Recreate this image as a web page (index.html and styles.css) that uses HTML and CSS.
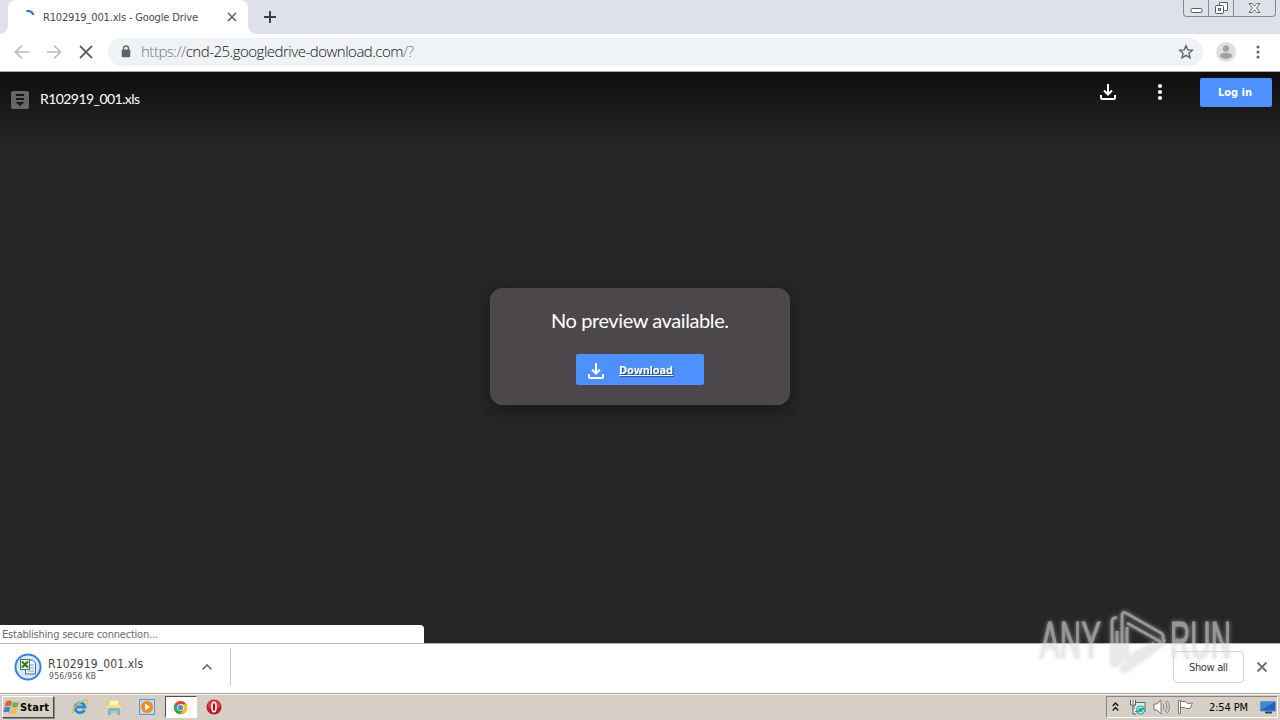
FILE: index.html
```html
<!DOCTYPE html>
<html lang="en">
<head>
<meta charset="utf-8">
<title>R102919_001.xls - Google Drive</title>
<link rel="stylesheet" href="styles.css">
</head>
<body>
<div class="screen">
  <header class="tabstrip">
    <div class="tab">
      <svg class="spinner" width="16" height="16" viewBox="0 0 16 16"><path d="M5.500 2.200C9 1.400 11.200 3 12.400 6" fill="none" stroke="#2671d9" stroke-width="2"/></svg>
      <span class="tab-title"><svg class="fit" width="156" height="18"><text x="0" y="13" textLength="155">R102919_001.xls - Google Drive</text></svg></span>
      <svg class="tab-close" width="10" height="10" viewBox="0 0 10 10"><path d="M1 1l8 8M9 1L1 9" stroke="#5f6368" stroke-width="1.7"/></svg>
      <i class="curve curve-left"></i><i class="curve curve-right"></i>
    </div>
    <svg class="new-tab" width="12" height="12" viewBox="0 0 12 12"><path d="M6 0v12M0 6h12" stroke="#3c4043" stroke-width="2"/></svg>
    <div class="window-buttons">
      <span class="wb wb-min"><svg width="13" height="17" viewBox="0 0 13 17"><rect x="1" y="8.500" width="11" height="4" rx="1.200" fill="#fff" stroke="#555b66"/></svg></span>
      <span class="wb wb-max"><svg width="13" height="17" viewBox="0 0 13 17"><path d="M4.500 5.500v-3h8v8h-3" fill="#fff" stroke="#555b66"/><rect x=".5" y="5.500" width="8" height="8" rx="1" fill="#fff" stroke="#555b66"/><rect x="3.500" y="8.500" width="2" height="2" fill="none" stroke="#555b66"/></svg></span>
      <span class="wb wb-close"><svg width="13" height="17" viewBox="0 0 13 17"><path d="M1 3.500h3.200l2.300 2.700 2.300-2.700H12L8.500 8l3.500 4.500H8.800L6.500 9.800l-2.300 2.700H1L4.500 8z" fill="#fff" stroke="#555b66" stroke-width=".9"/></svg></span>
    </div>
  </header>

  <nav class="toolbar">
    <svg class="nav-icon" width="16" height="16" viewBox="0 0 16 16"><path d="M15 8H2M8 1.500L1.500 8 8 14.500" fill="none" stroke="#bababa" stroke-width="1.700"/></svg>
    <svg class="nav-icon" width="16" height="16" viewBox="0 0 16 16"><path d="M1 8h13M8 1.500L14.500 8 8 14.500" fill="none" stroke="#bababa" stroke-width="1.700"/></svg>
    <svg class="nav-icon" width="16" height="16" viewBox="0 0 16 16"><path d="M2 2l12 12M14 2L2 14" stroke="#5f6368" stroke-width="1.800"/></svg>
    <div class="omnibox">
      <svg class="lock" width="10" height="13" viewBox="0 0 10 13"><path d="M2.500 6V3.500a2.500 2.500 0 0 1 5 0V6" fill="none" stroke="#5f6368" stroke-width="1.300"/><rect x=".7" y="4.500" width="8.600" height="7.800" rx="1" fill="#5f6368"/></svg>
      <svg class="url" width="276" height="24"><text x="0" y="17" textLength="273" fill="#70757a">https://<tspan fill="#101114">cnd-25.googledrive-download.com</tspan>/?</text></svg>
      <svg class="star" width="16" height="16" viewBox="0 0 16 16"><path d="M8 1.700l1.800 4.200 4.600.4-3.500 3 1.100 4.500L8 11.400l-4 2.400 1.100-4.500-3.500-3 4.600-.4z" fill="none" stroke="#5f6368" stroke-width="1.400"/></svg>
    </div>
    <svg class="avatar" width="20" height="20" viewBox="0 0 20 20"><circle cx="10" cy="10" r="10" fill="#dfdfdf"/><circle cx="10" cy="6.500" r="3.100" fill="#a1a1a1"/><ellipse cx="10" cy="13.700" rx="6" ry="3" fill="#a1a1a1"/></svg>
    <svg class="menu" width="4" height="14" viewBox="0 0 4 14"><g fill="#5f6368"><circle cx="2" cy="2" r="1.500"/><circle cx="2" cy="7" r="1.500"/><circle cx="2" cy="12" r="1.500"/></g></svg>
  </nav>

  <main class="viewer">
    <div class="viewer-bar">
      <svg class="file-icon" width="18" height="18" viewBox="0 0 18 18"><rect width="18" height="18" rx="2" fill="#666"/><path d="M5 4h8M5 8h8" stroke="#161616" stroke-width="2"/><path d="M4.500 11h9L9 15z" fill="#161616"/></svg>
      <svg class="file-name" width="104" height="22"><text x="0" y="16" textLength="100">R102919_001.xls</text></svg>
      <svg class="bar-download" width="18" height="18" viewBox="0 0 18 18"><path d="M9 1v10M5 7.500l4 4 4-4M2 12v3q0 1 1 1h12q1 0 1-1v-3" fill="none" stroke="#fff" stroke-width="2"/></svg>
      <svg class="bar-menu" width="6" height="18" viewBox="0 0 6 18"><g fill="#fff"><circle cx="3" cy="3" r="2.100"/><circle cx="3" cy="9" r="2.100"/><circle cx="3" cy="15" r="2.100"/></g></svg>
      <div class="login"><svg width="36" height="18"><text x="0" y="12" textLength="34">Log in</text></svg></div>
    </div>
    <section class="preview">
      <svg class="message" width="180" height="30"><text x="1" y="21" textLength="178">No preview available.</text></svg>
      <div class="download">
        <svg width="18" height="18" viewBox="0 0 18 18"><path d="M9 1v10M5 7.500l4 4 4-4M2 12v3q0 1 1 1h12q1 0 1-1v-3" fill="none" stroke="#fff" stroke-width="2"/></svg>
        <svg class="download-label" width="56" height="18"><text x="1" y="13" textLength="54">Download</text></svg>
      </div>
    </section>
    <div class="status"><svg width="160" height="18"><text x="2" y="13" textLength="156">Establishing secure connection...</text></svg></div>
  </main>

  <section class="shelf">
    <svg class="xls" width="28" height="28" viewBox="0 0 28 28"><circle cx="14" cy="14" r="12.500" fill="#d9e7f8" stroke="#377fdc" stroke-width="2"/><path d="M11.500 7h7l3 3v11h-10z" fill="#eff5ff" stroke="#4667a3"/><path d="M14 12h6M14 15h6M14 18h6" stroke="#86a3cf"/><rect x="6.500" y="6.500" width="9" height="10" fill="#e9f5df" stroke="#418039"/><path d="M8 8.500l6 6M14 8.500l-6 6" stroke="#25742f" stroke-width="2"/></svg>
    <div class="file-info">
      <svg class="file-title" width="98" height="15"><text x="0" y="12" textLength="95">R102919_001.xls</text></svg>
      <svg class="file-size" width="52" height="10"><text x="1" y="8" textLength="47">956/956 KB</text></svg>
    </div>
    <svg class="chevron" width="12" height="8" viewBox="0 0 12 8"><path d="M1.500 6.500L6 2l4.500 4.500" fill="none" stroke="#6e6e6e" stroke-width="1.700"/></svg>
    <i class="shelf-rule"></i>
    <div class="show-all"><svg width="42" height="18"><text x="1" y="13" textLength="39">Show all</text></svg></div>
    <svg class="shelf-close" width="12" height="12" viewBox="0 0 12 12"><path d="M1.500 1.500l9 9M10.500 1.500l-9 9" stroke="#6b6f74" stroke-width="1.800"/></svg>
  </section>

  <footer class="taskbar">
    <div class="start">
      <svg width="17" height="17" viewBox="0 0 17 17"><path d="M3 2.500q3-2 6 0L7.700 7.500q-3-1.500-6 0z" fill="#df6038"/><path d="M10 3q3 1.300 6 0l-1.500 5q-3 1.500-5.800 0z" fill="#78ae43"/><path d="M1.500 8.600q3-1.500 5.900 0L6 13.500q-3-1.500-5.800 0z" fill="#4583ca"/><path d="M8.400 9.200q3 1.500 5.900 0L13 14q-3 1.700-6 0z" fill="#edba3c"/></svg>
      <svg class="start-label" width="31" height="16"><text x="0" y="12" textLength="29">Start</text></svg>
    </div>
    <div class="launch"><svg width="18" height="18" viewBox="0 0 18 18"><path d="M13.500 12A5 5 0 1 1 14 9H5" fill="none" stroke="#278bd1" stroke-width="2.800"/><path d="M2 16C-1 13 8 3 15 2q3 0 1 3.500" fill="none" stroke="#e4b84b" stroke-width="1.400"/><path d="M5 6q3-4 7-2" fill="none" stroke="#75cef5"/></svg></div>
    <div class="launch"><svg width="18" height="18" viewBox="0 0 18 18"><path d="M2 3h5l1 2h8v10H2z" fill="#e7c772"/><path d="M4 2h10v9H4z" fill="#fff4b8" stroke="#d9bd67" stroke-width=".7"/><path d="M2 7h14v6H2z" fill="#f5dd87"/><path d="M3 17v-6q0-1 1-1h10q1 0 1 1v6h-3v-4H6v4z" fill="#73b9dc"/></svg></div>
    <div class="launch"><svg width="18" height="18" viewBox="0 0 18 18"><rect x="1.500" y="1.500" width="15" height="15" fill="#b9daf2" stroke="#5b99cd"/><circle cx="9" cy="9" r="6" fill="#f08a1d"/><path d="M7 5.500v7l5-3.500z" fill="#fff"/></svg></div>
    <div class="launch active"><svg width="15" height="15" viewBox="0 0 18 18"><circle cx="9" cy="9" r="8" fill="#e54335"/><path d="M9 9L2.100 5A8 8 0 0 0 9 17l4-7z" fill="#36a853"/><path d="M9 5h7a8 8 0 0 1-7 12l4-7z" fill="#fbc116"/><circle cx="9" cy="9" r="4" fill="#fff"/><circle cx="9" cy="9" r="3.100" fill="#4688ed"/></svg></div>
    <div class="launch"><svg width="16" height="16" viewBox="0 0 16 16"><circle cx="8" cy="8" r="7.500" fill="#b91b20"/><ellipse cx="8" cy="6" rx="6" ry="4.500" fill="#da4547"/><ellipse cx="8" cy="8" rx="2" ry="4.700" fill="#9d151a" stroke="#fff" stroke-width="1.600"/></svg></div>
    <div class="tray">
      <svg class="tray-up" width="7" height="10" viewBox="0 0 7 10"><path d="M.7 4l2.800-3 2.800 3M.7 8.500l2.800-3 2.800 3" fill="none" stroke="#111" stroke-width="1.300"/></svg>
      <svg class="tray-net" width="17" height="17" viewBox="0 0 17 17"><rect x="5" y="3.500" width="11" height="9" fill="#d5ece8" stroke="#5b6f71"/><path d="M1.500 1v5h5V1M4 1v4M4 6v9h3" fill="#fff" stroke="#555"/><circle cx="11.500" cy="11" r="4.500" fill="#36a6a0"/><path d="M8.500 11a3 3 0 0 1 5-2M14.500 11a3 3 0 0 1-5 2" fill="none" stroke="#ccebe3" stroke-width="1.300"/></svg>
      <svg class="tray-sound" width="17" height="16" viewBox="0 0 17 16"><path d="M1 5h3l4-4v14l-4-4H1z" fill="#fff" stroke="#777"/><path d="M10 5q2 3 0 6M12 3q4 5 0 10M14 1.500q5 6.500 0 13" fill="none" stroke="#888"/></svg>
      <svg class="tray-flag" width="17" height="16" viewBox="0 0 17 16"><path d="M1.500 1.500h2v13h-2z" fill="#fff" stroke="#777"/><path d="M3.500 2.500h5l2 2 5-.5-2.500 5.500H9l-1-1H3.500z" fill="#fff" stroke="#777"/></svg>
      <svg class="clock" width="42" height="16"><text x="0" y="12" textLength="39">2:54 PM</text></svg>
      <svg class="desktop" width="16" height="14" viewBox="0 0 16 14"><path d="M.5 1.500h15V11H.5z" fill="#245fbd" stroke="#6d94c7"/><path d="M1 2h14L3 9H1z" fill="#3c86dc"/><path d="M5 12.500h7" stroke="#244471" stroke-width="2"/></svg>
    </div>
  </footer>

  <svg class="watermark" width="210" height="72" viewBox="0 0 210 72">
    <g class="mark-text"><text x="10" y="54" textLength="61" lengthAdjust="spacingAndGlyphs">ANY</text><text x="140" y="54" textLength="61" lengthAdjust="spacingAndGlyphs">RUN</text></g>
    <path class="mark-line" d="M87 14q-5-1-5 4v40q0 4 5 3M87 27v34M92 60V12q0-5 4-3l35 20q4 3 1 6M97 19l34 19M97 23v32l27-16M134 35q1 3-2 5L97 66q-4 3-5-2l38-24"/>
  </svg>
</div>
</body>
</html>
```
FILE: styles.css
```css
* { box-sizing: border-box; }
body { margin: 0; overflow: hidden; font: 11px "DejaVu Sans Condensed", "DejaVu Sans", sans-serif; }
svg { display: block; flex: none; }
.screen { position: relative; width: 1280px; height: 720px; display: flex; flex-direction: column; }
.tabstrip { height: 34px; background: #dee1e8; display: flex; padding-left: 8px; }
.tab { position: relative; width: 240px; height: 34px; background: #fff; border-radius: 8px 8px 0 0; display: flex; align-items: center; padding-left: 13px; }
.tab-title { margin-left: 6px; fill: #45494d; }
.tab-close { margin-left: 28px; }
.curve { position: absolute; bottom: 0; width: 8px; height: 8px; }
.curve-left { left: -8px; background: radial-gradient(circle at 0 0, transparent 7.5px, #fff 8px); }
.curve-right { right: -8px; background: radial-gradient(circle at 100% 0, transparent 7.5px, #fff 8px); }
.new-tab { margin: 11px 0 0 16px; }
.window-buttons { margin-left: auto; margin-right: 4px; display: flex; height: 17px; border: 1px solid #858b96; border-top: 0; border-radius: 0 0 4px 4px; }
.wb { display: flex; justify-content: center; width: 25px; border-right: 1px solid #858b96; }
.wb-close { width: 41px; border-right: 0; }
.toolbar { height: 38px; background: #fff; border-bottom: 1px solid #a8a8a8; display: flex; align-items: center; padding: 0 20px 2px 14px; }
.nav-icon { margin-right: 16px; }
.omnibox { width: 1095px; height: 28px; margin-left: -2px; border-radius: 14px; background: #f0f3f6; display: flex; align-items: center; padding: 0 9px 0 13px; }
.url { margin-left: 10px; font: 15px "Open Sans", sans-serif; font-weight: 300; }
.star { margin-left: auto; }
.avatar { margin-left: 13px; }
.menu { margin-left: 20px; }
.viewer { position: relative; height: 571px; background: linear-gradient(#0e0e0e 0, #121212 12px, #262626 76px, #262626 100%); display: flex; flex-direction: column; align-items: center; }
.viewer-bar { width: 100%; height: 56px; display: flex; align-items: flex-start; padding: 6px 8px 0 11px; }
.file-icon { margin-top: 13px; }
.file-name { margin: 10px 0 0 11px; font: 14px Lato, sans-serif; fill: #fff; }
.bar-download { margin: 5px 0 0 955px; }
.bar-menu { margin: 5px 0 0 40px; }
.login { margin-left: auto; width: 72px; height: 29px; border-radius: 2px; background: #4d90fe; display: flex; align-items: center; justify-content: center; font: bold 11px "DejaVu Sans Condensed", sans-serif; fill: #fff; }
.preview { width: 300px; height: 117px; margin-top: 160px; border: 1px solid #50494d; border-radius: 12px; background: #4c474b; box-shadow: 0 5px 14px 2px #1b1b1b; display: flex; flex-direction: column; align-items: center; padding-top: 18px; }
.message { font: 20px Lato, sans-serif; fill: #fff; }
.download { width: 128px; height: 31px; margin-top: 17px; border-radius: 2px; background: #4d90fe; display: flex; align-items: center; padding: 3px 0 0 11px; }
.download-label { margin: -2px 0 0 13px; font: bold 11px "DejaVu Sans Condensed", sans-serif; fill: #fff; text-decoration: underline; filter: drop-shadow(1px 1px 0 #234b83); }
.status { align-self: flex-start; margin-top: auto; width: 424px; height: 18px; background: #fff; border-top-right-radius: 4px; fill: #6b6b6b; }
.shelf { height: 50px; background: #fff; border-top: 1px solid #b5b5b5; display: flex; align-items: center; padding: 0 12px 3px 14px; }
.file-info { width: 98px; margin-left: 6px; padding-top: 3px; }
.file-title { font-size: 12px; fill: #444; }
.file-size { font-size: 8.5px; fill: #555; }
.chevron { margin-left: 55px; }
.shelf-rule { width: 1px; height: 38px; margin-left: 17px; background: #c7c7c7; }
.show-all { margin-left: auto; width: 71px; height: 32px; border: 1px solid #d2d4d7; border-radius: 4px; display: flex; align-items: center; justify-content: center; fill: #34383d; }
.shelf-close { margin-left: 12px; }
.taskbar { height: 27px; background: #d6cfc6; border-top: 1px solid #aaa8a4; box-shadow: inset 0 1px #f6f3ef; display: flex; align-items: center; padding: 1px 2px 1px; }
.start { width: 52px; height: 22px; margin-right: 10px; border: 1px solid; border-color: #fff #504d49 #504d49 #fff; box-shadow: 1px 1px #888; display: flex; align-items: center; font: bold 11px "DejaVu Sans Condensed", sans-serif; }
.launch { width: 32px; height: 22px; margin-right: 1.5px; display: flex; align-items: center; justify-content: center; }
.active { background: #fff; border: 1px solid; border-color: #55514c #fff #fff #55514c; }
.tray { margin-left: auto; width: 172px; height: 22px; border: 1px solid; border-color: #89847e #fff #fff #89847e; display: flex; align-items: center; padding-left: 5px; }
.tray-net { margin-left: 10px; }
.tray-sound, .tray-flag { margin-left: 7px; }
.clock { margin-left: 15px; }
.desktop { margin-left: 9px; }
.watermark { position: absolute; left: 1030px; top: 604px; opacity: .62; filter: drop-shadow(0 0 2px #ccc); }
.mark-text { font: 51px "Liberation Sans Narrow", "Liberation Sans", sans-serif; fill: #dcdcdc; stroke: #dcdcdc; stroke-width: 1; }
.mark-line { fill: none; stroke: #dcdcdc; stroke-width: 3; stroke-linejoin: round; }
```
